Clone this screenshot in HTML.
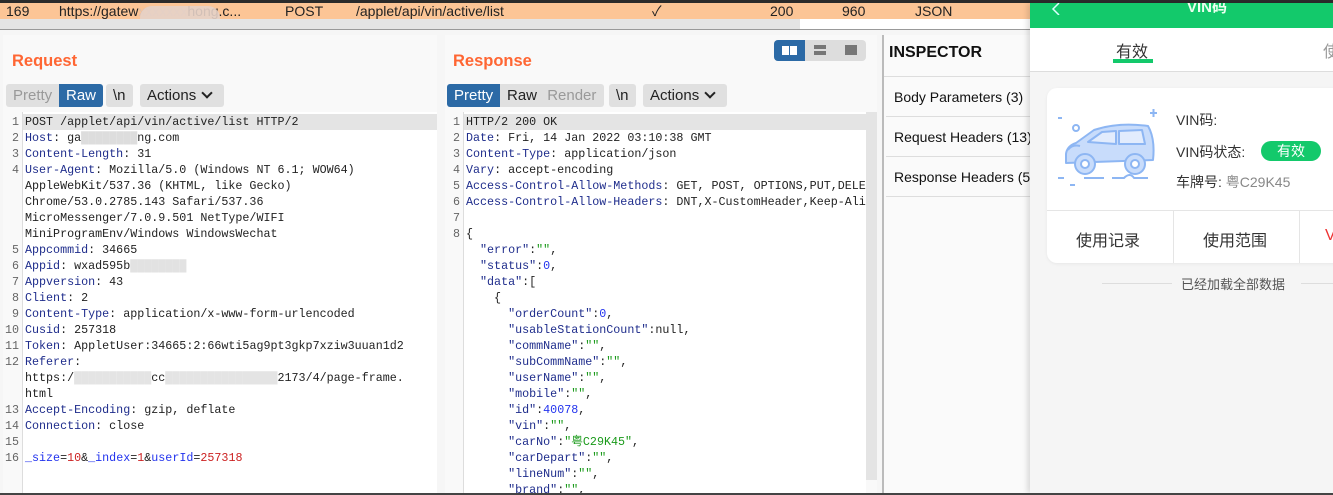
<!DOCTYPE html>
<html><head><meta charset="utf-8"><style>
*{margin:0;padding:0;box-sizing:border-box}
body{width:1333px;height:495px;overflow:hidden;background:#f3f3f3;font-family:"Liberation Sans","Noto Sans CJK SC",sans-serif;position:relative}
.abs{position:absolute}
.code{font-family:"Liberation Mono","Noto Sans CJK SC",monospace;font-size:11.7px;line-height:16px;white-space:pre;color:#222}
.k{color:#1f2d8c}.n{color:#2233ee}.s{color:#1a9a1a}.r{color:#cc2222}
.ln{color:#666;text-align:right;width:16px}
.btn{position:absolute;height:23px;line-height:23px;font-size:15px;border-radius:3px;background:#e0e0e0;color:#222;padding:0 7px;white-space:nowrap}
.blue{background:#2c6aa6;color:#fff}
.grey{color:#999}
.chev{display:inline-block;width:8px;height:8px;border-right:2px solid #222;border-bottom:2px solid #222;transform:rotate(45deg);margin-left:7px;position:relative;top:-3px}
.ins{position:absolute;left:886px;width:144px;height:40px;border-bottom:1px solid #ddd;font-size:14px;line-height:40px;padding-left:8px;white-space:nowrap;overflow:hidden;color:#111}
</style></head><body>
<div class="abs" style="left:0;top:0;width:1333px;height:3px;background:#2b2b2b"></div>
<div class="abs" style="left:0;top:3px;width:1333px;height:16px;background:#fcc596;font-size:14px;line-height:16px;color:#222;white-space:nowrap">
<span class="abs" style="left:6px">169</span><span class="abs" style="left:59px">https://gatew<span style="color:#ddc0b0">xxxxxxx</span>hong.c...</span><span class="abs" style="left:285px">POST</span><span class="abs" style="left:356px">/applet/api/vin/active/list</span><span class="abs" style="left:652px">✓</span><span class="abs" style="left:770px">200</span><span class="abs" style="left:842px">960</span><span class="abs" style="left:915px">JSON</span></div>
<div class="abs" style="left:140px;top:6px;width:80px;height:26px;border-radius:12px;background:#e6d2c8;opacity:.9"></div>
<div class="abs" style="left:0;top:19px;width:1333px;height:10px;background:#fff"></div>
<div class="abs" style="left:0;top:19px;width:800px;height:10px;background:#e4e4e4"></div>
<div class="abs" style="left:0;top:29px;width:1030px;height:1px;background:#999"></div>
<div class="abs" style="left:0;top:30px;width:1030px;height:463px;background:#f6f6f6"></div>

<!-- Request -->
<div class="abs" style="left:3px;top:35px;width:434px;height:458px;background:#f9f9f9"></div>
<div class="abs" style="left:12px;top:52px;font-size:16.5px;font-weight:bold;color:#ff6633">Request</div>
<div class="btn grey" style="left:6px;top:84px;width:53px;border-radius:3px 0 0 3px">Pretty</div>
<div class="btn blue" style="left:59px;top:84px;border-radius:0 3px 3px 0">Raw</div>
<div class="btn" style="left:106px;top:84px">\n</div>
<div class="btn" style="left:140px;top:84px;width:84px">Actions<span class="chev"></span></div>
<div class="abs" style="left:22px;top:112px;width:415px;height:381px;background:#fff;border-left:1px solid #ddd"></div>
<div class="abs" style="left:23px;top:114px;width:414px;height:16px;background:#e4e4e4"></div>
<div class="abs code ln" style="left:3px;top:114px">1
2
3
4
 
 
 
 
5
6
7
8
9
10
11
12
 
 
13
14
15
16</div>
<div class="abs code" style="left:25px;top:114px">POST /applet/api/vin/active/list HTTP/2
<span class="k">Host</span>: ga<span style="color:#ddd">████████</span>ng.com
<span class="k">Content-Length</span>: 31
<span class="k">User-Agent</span>: Mozilla/5.0 (Windows NT 6.1; WOW64)
AppleWebKit/537.36 (KHTML, like Gecko)
Chrome/53.0.2785.143 Safari/537.36
MicroMessenger/7.0.9.501 NetType/WIFI
MiniProgramEnv/Windows WindowsWechat
<span class="k">Appcommid</span>: 34665
<span class="k">Appid</span>: wxad595b<span style="color:#e2e2e2">████████</span>
<span class="k">Appversion</span>: 43
<span class="k">Client</span>: 2
<span class="k">Content-Type</span>: application/x-www-form-urlencoded
<span class="k">Cusid</span>: 257318
<span class="k">Token</span>: AppletUser:34665:2:66wti5ag9pt3gkp7xziw3uuan1d2
<span class="k">Referer</span>:
https:/<span style="color:#e4e4e4">███████████</span>cc<span style="color:#e4e4e4">████████████████</span>2173/4/page-frame.
html
<span class="k">Accept-Encoding</span>: gzip, deflate
<span class="k">Connection</span>: close

<span class="n">_size</span>=<span class="r">10</span>&amp;<span class="n">_index</span>=<span class="r">1</span>&amp;<span class="n">userId</span>=<span class="r">257318</span></div>

<!-- Response -->
<div class="abs" style="left:445px;top:35px;width:432px;height:458px;background:#f9f9f9"></div>
<div class="abs" style="left:774px;top:40px;width:92px;height:21px;background:#ddd;border-radius:4px"></div>
<div class="abs" style="left:774px;top:40px;width:31px;height:21px;background:#2c6aa6;border-radius:4px 0 0 4px"></div>
<div class="abs" style="left:782px;top:46px;width:7px;height:9px;background:#fff"></div><div class="abs" style="left:790px;top:46px;width:7px;height:9px;background:#fff"></div>
<div class="abs" style="left:814px;top:45px;width:12px;height:4px;background:#777"></div><div class="abs" style="left:814px;top:51px;width:12px;height:4px;background:#777"></div>
<div class="abs" style="left:845px;top:45px;width:12px;height:10px;background:#777"></div>
<div class="abs" style="left:453px;top:52px;font-size:16.5px;font-weight:bold;color:#ff6633">Response</div>
<div class="btn blue" style="left:447px;top:84px;border-radius:3px 0 0 3px">Pretty</div>
<div class="btn" style="left:500px;top:84px;width:104px;border-radius:0 3px 3px 0">Raw <span class="grey" style="margin-left:6px">Render</span></div>
<div class="btn" style="left:609px;top:84px">\n</div>
<div class="btn" style="left:643px;top:84px;width:84px">Actions<span class="chev"></span></div>
<div class="abs" style="left:463px;top:112px;width:403px;height:381px;background:#fff;border-left:1px solid #ddd"></div>
<div class="abs" style="left:866px;top:112px;width:11px;height:368px;background:#e4e4e4"></div>
<div class="abs" style="left:464px;top:114px;width:402px;height:16px;background:#e4e4e4"></div>
<div class="abs code ln" style="left:444px;top:114px">1
2
3
4
5
6
7
8</div>
<div class="abs" style="left:466px;top:114px;width:400px;height:380px;overflow:hidden"><div class="code">HTTP/2 200 OK
<span class="k">Date</span>: Fri, 14 Jan 2022 03:10:38 GMT
<span class="k">Content-Type</span>: application/json
<span class="k">Vary</span>: accept-encoding
<span class="k">Access-Control-Allow-Methods</span>: GET, POST, OPTIONS,PUT,DELETE
<span class="k">Access-Control-Allow-Headers</span>: DNT,X-CustomHeader,Keep-Alive

{
  <span class="k">"error"</span>:<span class="s">""</span>,
  <span class="k">"status"</span>:<span class="n">0</span>,
  <span class="k">"data"</span>:[
    {
      <span class="k">"orderCount"</span>:<span class="n">0</span>,
      <span class="k">"usableStationCount"</span>:null,
      <span class="k">"commName"</span>:<span class="s">""</span>,
      <span class="k">"subCommName"</span>:<span class="s">""</span>,
      <span class="k">"userName"</span>:<span class="s">""</span>,
      <span class="k">"mobile"</span>:<span class="s">""</span>,
      <span class="k">"id"</span>:<span class="n">40078</span>,
      <span class="k">"vin"</span>:<span class="s">""</span>,
      <span class="k">"carNo"</span>:<span class="s">"粤C29K45"</span>,
      <span class="k">"carDepart"</span>:<span class="s">""</span>,
      <span class="k">"lineNum"</span>:<span class="s">""</span>,
      <span class="k">"brand"</span>:<span class="s">""</span>,</div></div>

<!-- Inspector -->
<div class="abs" style="left:882px;top:35px;width:2px;height:458px;background:#bbb"></div>
<div class="abs" style="left:884px;top:35px;width:146px;height:458px;background:#fafafa"></div>
<div class="abs" style="left:889px;top:44px;font-size:16px;font-weight:bold;color:#111">INSPECTOR</div>
<div class="abs" style="left:884px;top:76px;width:146px;height:1px;background:#ddd"></div>
<div class="ins" style="top:77px">Body Parameters (3)</div>
<div class="ins" style="top:117px">Request Headers (13)</div>
<div class="ins" style="top:157px">Response Headers (5)</div>

<!-- Phone -->
<div class="abs" style="left:1030px;top:3px;width:303px;height:490px;background:#f5f5f5;box-shadow:-3px 0 5px rgba(0,0,0,.12)"></div>
<div class="abs" style="left:1030px;top:3px;width:303px;height:25px;background:#13c96b;overflow:hidden"><svg class="abs" style="left:21px;top:0" width="10" height="12"><path d="M8 0 L2 6 L8 12" stroke="#dff" stroke-width="1.5" fill="none"/></svg><span class="abs" style="left:157px;top:-7px;color:#eaffef;font-size:15px;font-weight:bold">VIN码</span></div>
<div class="abs" style="left:1030px;top:28px;width:303px;height:44px;background:#fff;border-bottom:1px solid #ddd"></div>
<div class="abs" style="left:1116px;top:38px;font-size:16px;color:#333">有效</div>
<div class="abs" style="left:1113px;top:59px;width:40px;height:4px;background:#13c96b"></div>
<div class="abs" style="left:1323px;top:38px;font-size:16px;color:#999">使</div>
<div class="abs" style="left:1047px;top:88px;width:300px;height:175px;background:#fff;border-radius:10px;box-shadow:0 1px 3px rgba(0,0,0,.06)"></div>
<svg class="abs" style="left:1058px;top:108px" width="100" height="80" viewBox="0 0 100 80" fill="none" stroke="#8db6f3" stroke-width="2" stroke-linejoin="round">
<path d="M8 55 L8 46 Q9 38 18 35 L36 22 Q60 14 90 18 L92 22 Q97 34 95 52 L8 55Z" fill="#c8dcfb"/>
<path d="M30 34 L44 24 L58 23 L58 36Z M61 23 L84 22 L87 36 L61 36Z" fill="#e2ecfd"/>
<path d="M10 42 Q14 36 22 38" />
<circle cx="27" cy="56" r="10" fill="#c8dcfb"/><circle cx="27" cy="56" r="4" fill="#fff"/>
<circle cx="77" cy="56" r="10" fill="#c8dcfb"/><circle cx="77" cy="56" r="4" fill="#fff"/>
<circle cx="18" cy="20" r="3"/><path d="M-2 10h6M92 5h7M95.5 1v8M-2 70h8M12 77h5M26 70h20M54 70h12q6-6 10 0h14"/>
</svg>
<div class="abs" style="left:1176px;top:110px;font-size:14px;color:#333">VIN码:</div>
<div class="abs" style="left:1176px;top:142px;font-size:14px;color:#333">VIN码状态:</div>
<div class="abs" style="left:1261px;top:141px;width:60px;height:20px;border-radius:10px;background:#13c96b;color:#fff;font-size:14px;line-height:20px;text-align:center">有效</div>
<div class="abs" style="left:1176px;top:172px;font-size:14px;color:#333">车牌号: <span style="color:#888">粤C29K45</span></div>
<div class="abs" style="left:1047px;top:210px;width:286px;height:1px;background:#e5e5e5"></div>
<div class="abs" style="left:1173px;top:211px;width:1px;height:52px;background:#e5e5e5"></div>
<div class="abs" style="left:1299px;top:211px;width:1px;height:52px;background:#e5e5e5"></div>
<div class="abs" style="left:1076px;top:227px;font-size:16px;color:#333">使用记录</div>
<div class="abs" style="left:1203px;top:227px;font-size:16px;color:#333">使用范围</div>
<div class="abs" style="left:1325px;top:227px;font-size:16px;color:#e33">V</div>
<div class="abs" style="left:1102px;top:283px;width:70px;height:1px;background:#ddd"></div>
<div class="abs" style="left:1181px;top:274px;font-size:13px;color:#555">已经加载全部数据</div>
<div class="abs" style="left:1301px;top:283px;width:32px;height:1px;background:#ddd"></div>
<div class="abs" style="left:0;top:493px;width:1333px;height:2px;background:#444"></div>
</body></html>
